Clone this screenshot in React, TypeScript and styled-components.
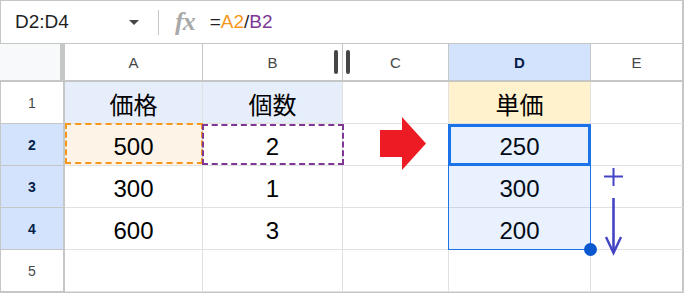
import React from "react";
import styled, { createGlobalStyle } from "styled-components";

const GlobalStyle = createGlobalStyle`
  html, body {
    margin: 0;
    padding: 0;
    background: #fff;
  }
  body {
    width: 686px;
    height: 293px;
    overflow: hidden;
  }
`;

const UI_FONT = `"Liberation Sans", Arial, sans-serif`;
const CJK_FONT = `"Liberation Sans", "Noto Sans CJK JP", sans-serif`;

const HEADER_LINE = "#c4c7c5";
const GRID_LINE = "#e1e1e1";
const SELECT_BLUE = "#1a73e8";
const HEADER_SELECTED = "#d3e3fd";

const Frame = styled.div`
  position: relative;
  width: 683px;
  border-left: 1px solid ${HEADER_LINE};
  border-top: 1px solid ${HEADER_LINE};
  border-bottom: 1px solid ${HEADER_LINE};
  font-family: ${UI_FONT};
`;

const FormulaBar = styled.div`
  display: flex;
  align-items: center;
  height: 42px;
  border-bottom: 1px solid ${HEADER_LINE};
  border-right: 2px solid ${HEADER_LINE};
`;

const NameBox = styled.div`
  display: flex;
  align-items: center;
  justify-content: space-between;
  box-sizing: border-box;
  width: 149px;
  padding: 0 11px 0 14px;
  font-size: 19px;
  color: #1f1f1f;
`;

const Caret = styled.span`
  width: 0;
  height: 0;
  border-left: 5px solid transparent;
  border-right: 5px solid transparent;
  border-top: 5px solid #444746;
`;

const Divider = styled.span`
  width: 1px;
  height: 25px;
  margin: 0 16px 0 8px;
  background: ${HEADER_LINE};
`;

const FxLabel = styled.span`
  font-family: "Liberation Serif", "DejaVu Serif", serif;
  font-style: italic;
  font-weight: bold;
  font-size: 26px;
  line-height: 1;
  color: #a9a9a9;
  letter-spacing: -1px;
  margin-right: 15px;
`;

const Formula = styled.span`
  font-size: 19px;
  color: #1f1f1f;
`;

const Ref = styled.span<{ $color: string }>`
  color: ${({ $color }) => $color};
`;

const Grid = styled.div`
  display: grid;
  grid-template-columns: 64px 138px 140px 106px 142px 93px;
  grid-template-rows: 38px repeat(5, 42px);
`;

const Corner = styled.div`
  background: #f8f9fa;
  border-right: 5px solid ${HEADER_LINE};
  border-bottom: 2px solid ${HEADER_LINE};
  margin-left: -1px;
`;

const ColHeader = styled.div<{ $selected?: boolean; $last?: boolean }>`
  display: flex;
  align-items: center;
  justify-content: center;
  position: relative;
  font-size: 15px;
  background: ${({ $selected }) => ($selected ? HEADER_SELECTED : "#fff")};
  color: ${({ $selected }) => ($selected ? "#041e49" : "#444746")};
  font-weight: ${({ $selected }) => ($selected ? 700 : 400)};
  border-right: ${({ $last }) => ($last ? 2 : 1)}px solid ${HEADER_LINE};
  border-bottom: 2px solid ${HEADER_LINE};
`;

const ResizeGrip = styled.span`
  position: absolute;
  top: 6px;
  width: 4px;
  height: 24px;
  border-radius: 2px;
  background: #444746;
`;

const RowHeader = styled.div<{ $selected?: boolean }>`
  display: flex;
  align-items: center;
  justify-content: center;
  font-size: 14px;
  background: ${({ $selected }) => ($selected ? HEADER_SELECTED : "#fff")};
  color: ${({ $selected }) => ($selected ? "#041e49" : "#444746")};
  font-weight: ${({ $selected }) => ($selected ? 700 : 400)};
  border-right: 2px solid ${HEADER_LINE};
  border-bottom: 1px solid ${HEADER_LINE};
`;

const Cell = styled.div<{ $bg?: string; $last?: boolean; $cjk?: boolean }>`
  display: flex;
  align-items: center;
  justify-content: center;
  position: relative;
  padding-top: ${({ $cjk }) => ($cjk ? 2 : 5)}px;
  box-sizing: border-box;
  font-family: ${({ $cjk }) => ($cjk ? CJK_FONT : UI_FONT)};
  font-size: 24px;
  color: #000;
  background: ${({ $bg }) => $bg || "#fff"};
  border-right: ${({ $last }) => ($last ? `2px solid ${HEADER_LINE}` : `1px solid ${GRID_LINE}`)};
  border-bottom: 1px solid ${GRID_LINE};
`;

const RefCell = styled(Cell)<{ $dash: string; $shift?: number }>`
  &::after {
    content: "";
    position: absolute;
    top: ${({ $shift }) => ($shift ? 0 : -1)}px;
    bottom: ${({ $shift }) => ($shift ? 0 : 1)}px;
    left: ${({ $shift }) => -($shift || 0)}px;
    right: ${({ $shift }) => -1 - ($shift || 0)}px;
    border: 2px dashed ${({ $dash }) => $dash};
    z-index: 2;
  }
`;

const RangeFrame = styled.div`
  position: absolute;
  left: 447px;
  top: 123px;
  width: 143px;
  height: 126px;
  box-sizing: border-box;
  border: 1px solid ${SELECT_BLUE};
  background: rgba(26, 115, 232, 0.1);
  pointer-events: none;
`;

const ActiveFrame = styled.div`
  position: absolute;
  left: 447px;
  top: 123px;
  width: 143px;
  height: 42px;
  box-sizing: border-box;
  border: 3px solid ${SELECT_BLUE};
  pointer-events: none;
`;

const FillHandle = styled.div`
  position: absolute;
  left: 583px;
  top: 242px;
  width: 13px;
  height: 13px;
  border-radius: 50%;
  background: #0b57d0;
`;

const Overlay = styled.svg`
  position: absolute;
  overflow: visible;
`;

const columns = ["A", "B", "C", "D", "E"];

type Row = {
  n: number;
  selected?: boolean;
  cells: React.ReactNode[];
};

export default function App() {
  const rows: Row[] = [
    {
      n: 1,
      cells: [
        <Cell key="a" $bg="#e6eefb" $cjk>価格</Cell>,
        <Cell key="b" $bg="#e6eefb" $cjk>個数</Cell>,
        <Cell key="c" />,
        <Cell key="d" $bg="#fff2cc" $cjk>単価</Cell>,
        <Cell key="e" $last />,
      ],
    },
    {
      n: 2,
      selected: true,
      cells: [
        <RefCell key="a" $bg="#fdf3e7" $dash="#f7981d">500</RefCell>,
        <RefCell key="b" $dash="#7e3794" $shift={1}>2</RefCell>,
        <Cell key="c" />,
        <Cell key="d">250</Cell>,
        <Cell key="e" $last />,
      ],
    },
    {
      n: 3,
      selected: true,
      cells: [
        <Cell key="a">300</Cell>,
        <Cell key="b">1</Cell>,
        <Cell key="c" />,
        <Cell key="d">300</Cell>,
        <Cell key="e" $last />,
      ],
    },
    {
      n: 4,
      selected: true,
      cells: [
        <Cell key="a">600</Cell>,
        <Cell key="b">3</Cell>,
        <Cell key="c" />,
        <Cell key="d">200</Cell>,
        <Cell key="e" $last />,
      ],
    },
    {
      n: 5,
      cells: [
        <Cell key="a" />,
        <Cell key="b" />,
        <Cell key="c" />,
        <Cell key="d" />,
        <Cell key="e" $last />,
      ],
    },
  ];

  return (
    <>
      <GlobalStyle />
      <Frame>
        <FormulaBar>
          <NameBox>
            <span>D2:D4</span>
            <Caret />
          </NameBox>
          <Divider />
          <FxLabel>fx</FxLabel>
          <Formula>
            =<Ref $color="#f7981d">A2</Ref>/<Ref $color="#7e3794">B2</Ref>
          </Formula>
        </FormulaBar>
        <Grid>
          <Corner />
          {columns.map((c, i) => (
            <ColHeader key={c} $selected={c === "D"} $last={i === columns.length - 1}>
              {c}
              {c === "B" && <ResizeGrip style={{ right: 4 }} />}
              {c === "C" && <ResizeGrip style={{ left: 3 }} />}
            </ColHeader>
          ))}
          {rows.map((r) => (
            <React.Fragment key={r.n}>
              <RowHeader $selected={r.selected}>{r.n}</RowHeader>
              {r.cells}
            </React.Fragment>
          ))}
        </Grid>

        <RangeFrame />
        <ActiveFrame />
        <FillHandle />

        {/* red arrow pointing at the result column */}
        <Overlay style={{ left: 379, top: 116 }} width="47" height="54" viewBox="0 0 47 54">
          <polygon points="0,13 22,13 22,0 46,26.5 22,53 22,40 0,40" fill="#ed1c24" />
        </Overlay>

        {/* fill-down hint */}
        <Overlay style={{ left: 599, top: 164 }} width="26" height="92" viewBox="0 0 26 92">
          <g stroke="#4343c6" fill="none" strokeLinecap="butt">
            <line x1="4" y1="11.5" x2="23" y2="11.5" strokeWidth="2" />
            <line x1="13.5" y1="3" x2="13.5" y2="21" strokeWidth="2" />
            <line x1="13.5" y1="33" x2="13.5" y2="87" strokeWidth="2.6" />
            <polyline points="6,72 13.5,88 21,72" strokeWidth="2.4" strokeLinejoin="miter" />
          </g>
        </Overlay>
      </Frame>
    </>
  );
}
